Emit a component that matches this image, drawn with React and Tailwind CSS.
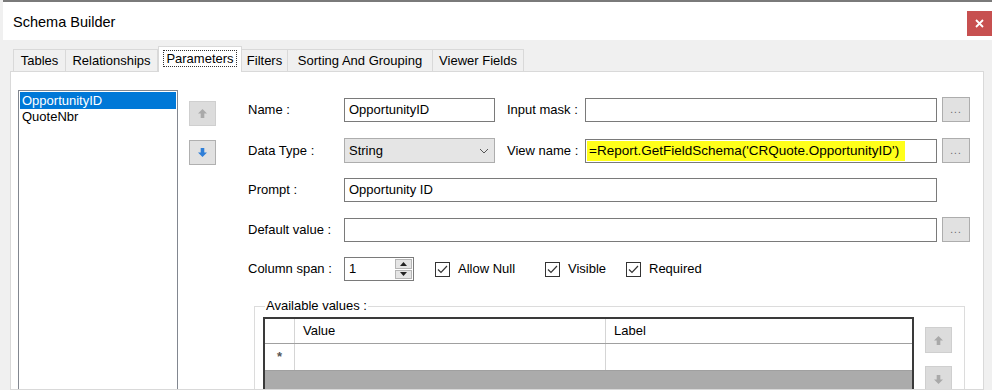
import React from "react";

const ArrowUp = ({ color = "#a9a9a9" }) => (
  <svg width="11" height="11" viewBox="0 0 11 11">
    <path d="M5.5 1 L10 5.5 H7.3 V10 H3.7 V5.5 H1 Z" fill={color} />
  </svg>
);

const ArrowDown = ({ color = "#2f7fd8" }) => (
  <svg width="11" height="11" viewBox="0 0 11 11">
    <path d="M3.7 1 H7.3 V5.5 H10 L5.5 10 L1 5.5 H3.7 Z" fill={color} />
  </svg>
);

const Check = () => (
  <div className="w-[15px] h-[15px] border border-[#333] bg-white flex items-center justify-center shrink-0">
    <svg width="11" height="9" viewBox="0 0 11 9">
      <path d="M1 4.5 L4 7.5 L10 1" fill="none" stroke="#333" strokeWidth="1.2" />
    </svg>
  </div>
);

const DotsButton = () => (
  <div className="ml-[5px] w-[28px] h-[25px] bg-[#e1e1e1] border border-[#adadad] flex items-end justify-center pb-[6px]">
    <span className="text-[10px] leading-none text-[#666] tracking-[1px]">...</span>
  </div>
);

const Input = ({ w, children }) => (
  <div className={`${w} h-[24px] bg-white border border-[#7a7a7a] flex items-center pl-[4px] overflow-hidden whitespace-nowrap`}>
    {children}
  </div>
);

const tabs = [
  { label: "Tables", w: "w-[53px]" },
  { label: "Relationships", w: "w-[92px]" },
  { label: "Parameters", w: "w-[84px]", active: true },
  { label: "Filters", w: "w-[46px]" },
  { label: "Sorting And Grouping", w: "w-[145px]" },
  { label: "Viewer Fields", w: "w-[91px]" },
];

export default function App() {
  return (
    <div className="w-[992px] h-[390px] overflow-hidden bg-[#f0f0f0] font-['Liberation_Sans',Arial,sans-serif] text-[13px] text-black flex flex-col">
      {/* title bar */}
      <div className="h-[40px] shrink-0 bg-white border-t-2 border-[#7a7a7a] flex items-start pl-[10px] ml-[3px]">
        <span className="mt-[10px] text-[14.5px]">Schema Builder</span>
        <div className="ml-auto mt-[9px] w-[25px] h-[25px] bg-[#c75050] flex items-center justify-center">
          <svg width="9" height="9" viewBox="0 0 9 9">
            <path d="M1 1 L8 8 M8 1 L1 8" stroke="white" strokeWidth="1.8" />
          </svg>
        </div>
      </div>

      {/* tabs */}
      <div className="mt-[6px] h-[25px] shrink-0 flex items-end pl-[13px]">
        {tabs.map((t) =>
          t.active ? (
            <div
              key={t.label}
              className={`${t.w} h-[26px] -mb-[1px] relative z-10 bg-white border border-[#d9d9d9] border-b-0 flex items-start justify-center pt-[3px]`}
            >
              <span className="border border-dotted border-[#333] px-[2px] leading-[15px]">{t.label}</span>
            </div>
          ) : (
            <div
              key={t.label}
              className={`${t.w} h-[22px] bg-[#f0f0f0] border border-[#d9d9d9] border-b-0 border-l-0 first:border-l flex items-center justify-center whitespace-nowrap`}
            >
              {t.label}
            </div>
          )
        )}
      </div>

      {/* panel */}
      <div className="flex-1 ml-[10px] mr-[8px] bg-white border border-[#d9d9d9] flex overflow-hidden">
        {/* list */}
        <div className="ml-[7px] mt-[18px] w-[160px] h-[320px] shrink-0 border border-[#828790] p-[1px]">
          <div className="h-[17px] bg-[#0078d7] text-white pl-[2px] leading-[17px]">OpportunityID</div>
          <div className="h-[16px] pl-[2px] leading-[16px]">QuoteNbr</div>
        </div>

        {/* move buttons */}
        <div className="ml-[11px] mt-[29px] flex flex-col gap-[14px] shrink-0">
          <div className="w-[27px] h-[25px] bg-[#dcdcdc] border border-[#cfcfcf] flex items-center justify-center">
            <ArrowUp />
          </div>
          <div className="w-[27px] h-[25px] bg-[#e1e1e1] border border-[#b0b0b0] flex items-center justify-center">
            <ArrowDown />
          </div>
        </div>

        {/* form */}
        <div className="ml-[32px] mt-[25px] flex flex-col shrink-0">
          <div className="flex items-center h-[25px]">
            <span className="w-[96px]">Name :</span>
            <Input w="w-[151px]">OpportunityID</Input>
            <span className="ml-[12px] w-[78px]">Input mask :</span>
            <Input w="w-[352px]" />
            <DotsButton />
          </div>

          <div className="flex items-center h-[25px] mt-[16px]">
            <span className="w-[96px]">Data Type :</span>
            <div className="w-[151px] h-[25px] bg-[#e5e5e5] border border-[#adadad] flex items-center pl-[4px] pr-[5px]">
              <span>String</span>
              <svg className="ml-auto" width="10" height="6" viewBox="0 0 10 6">
                <path d="M1 1 L5 5 L9 1" fill="none" stroke="#555" strokeWidth="1" />
              </svg>
            </div>
            <span className="ml-[12px] w-[78px]">View name :</span>
            <Input w="w-[352px]">
              <span className="bg-[#ffff1a] h-[20px] leading-[20px] -ml-[3px] pl-[2px] pr-[6px] text-[13.5px]">
                =Report.GetFieldSchema('CRQuote.OpportunityID')
              </span>
            </Input>
            <DotsButton />
          </div>

          <div className="flex items-center h-[25px] mt-[15px]">
            <span className="w-[96px]">Prompt :</span>
            <Input w="w-[593px]">Opportunity ID</Input>
          </div>

          <div className="flex items-center h-[25px] mt-[15px]">
            <span className="w-[96px]">Default value :</span>
            <Input w="w-[593px]" />
            <DotsButton />
          </div>

          <div className="flex items-center h-[25px] mt-[15px]">
            <span className="w-[96px]">Column span :</span>
            <div className="w-[70px] h-[24px] bg-white border border-[#7a7a7a] flex items-center pl-[4px]">
              <span>1</span>
              <div className="ml-auto mr-[1px] w-[17px] h-[20px] flex flex-col gap-[1px]">
                <div className="flex-1 bg-[#e5e5e5] border border-[#b5b5b5] flex items-center justify-center">
                  <svg width="7" height="4" viewBox="0 0 7 4"><path d="M0 4 L3.5 0 L7 4 Z" fill="#222" /></svg>
                </div>
                <div className="flex-1 bg-[#e5e5e5] border border-[#b5b5b5] flex items-center justify-center">
                  <svg width="7" height="4" viewBox="0 0 7 4"><path d="M0 0 L3.5 4 L7 0 Z" fill="#222" /></svg>
                </div>
              </div>
            </div>
            <div className="ml-[21px] w-[110px] flex items-center gap-[8px]">
              <Check />
              <span>Allow Null</span>
            </div>
            <div className="w-[81px] flex items-center gap-[8px]">
              <Check />
              <span>Visible</span>
            </div>
            <div className="flex items-center gap-[8px]">
              <Check />
              <span>Required</span>
            </div>
          </div>

          {/* available values */}
          <fieldset className="ml-[6px] mt-[18px] w-[711px] h-[120px] border border-[#dcdcdc] pl-[8px]">
            <legend className="ml-[2px] px-[1px] leading-[14px]">Available values :</legend>
            <div className="flex mt-[4px]">
              <div className="w-[651px] h-[100px] border-2 border-[#3a3a3a] border-b-0 bg-[#ababab] flex flex-col">
                <div className="h-[25px] bg-white flex border-b border-[#a0a0a0]">
                  <div className="w-[30px] border-r border-[#d5d5d5]" />
                  <div className="w-[311px] border-r border-[#d5d5d5] flex items-center pl-[8px]">Value</div>
                  <div className="flex-1 flex items-center pl-[8px]">Label</div>
                </div>
                <div className="h-[27px] bg-white flex border-b border-[#a0a0a0]">
                  <div className="w-[30px] border-r border-[#d5d5d5] flex items-center justify-center">
                    <span className="text-[13px] text-[#555] font-bold">*</span>
                  </div>
                  <div className="w-[311px] border-r border-[#d5d5d5]" />
                  <div className="flex-1" />
                </div>
              </div>
              <div className="ml-[11px] mt-[10px] flex flex-col gap-[13px]">
                <div className="w-[27px] h-[26px] bg-[#dcdcdc] border border-[#cfcfcf] flex items-center justify-center">
                  <ArrowUp />
                </div>
                <div className="w-[27px] h-[26px] bg-[#dcdcdc] border border-[#cfcfcf] flex items-center justify-center">
                  <ArrowDown color="#a9a9a9" />
                </div>
              </div>
            </div>
          </fieldset>
        </div>
      </div>
    </div>
  );
}
